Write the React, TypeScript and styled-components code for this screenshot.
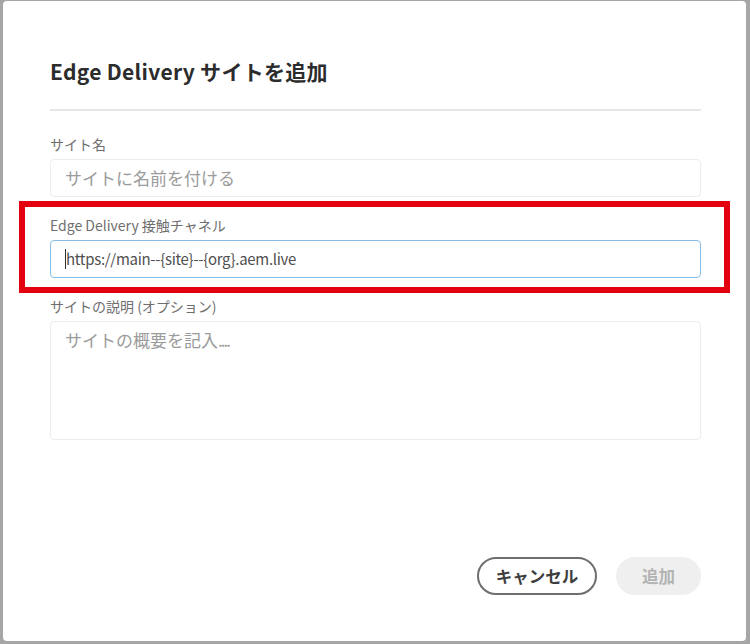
import React from "react";
import styled, { createGlobalStyle } from "styled-components";

const Global = createGlobalStyle`
  html, body { margin: 0; padding: 0; }
  body {
    background: #a6a6a6;
    font-family: "Noto Sans CJK JP", "Noto Sans", sans-serif;
  }
`;

const Backdrop = styled.div`
  width: 750px;
  height: 644px;
  box-sizing: border-box;
  padding: 1px 4px 3px 3px;
  background: #a6a6a6;
  display: flex;
`;

const Dialog = styled.div`
  position: relative;
  flex: 1;
  background: #ffffff;
  border-radius: 4px;
  display: flex;
  flex-direction: column;
  padding: 56px 45px 46px 47px;
  box-sizing: border-box;
`;

const Title = styled.h1`
  margin: 0;
  font-size: 21px;
  line-height: 28px;
  font-weight: 700;
  color: #2c2c2c;
  letter-spacing: 0.3px;
`;

const Divider = styled.hr`
  margin: 24px 0 0 0;
  border: none;
  height: 2px;
  background: #e6e6e6;
`;

const Form = styled.div`
  display: flex;
  flex-direction: column;
  gap: 18px;
  margin-top: 23px;
`;

const FieldGroup = styled.div`
  display: flex;
  flex-direction: column;
  gap: 5px;
`;

const Label = styled.label`
  font-size: 14px;
  line-height: 20px;
  color: #6e6e6e;
`;

const Field = styled.div<{ $focused?: boolean; $tall?: boolean }>`
  box-sizing: border-box;
  height: ${(p) => (p.$tall ? "119px" : "38px")};
  border: 1px solid ${(p) => (p.$focused ? "#86bfe6" : "#ededed")};
  border-radius: 4px;
  padding: ${(p) => (p.$tall ? "5px 14px" : "0 14px")};
  display: flex;
  align-items: ${(p) => (p.$tall ? "flex-start" : "center")};
  font-size: 17px;
  line-height: 26px;
  background: #fff;
`;

const Placeholder = styled.span`
  color: #9b9b9b;
`;

const Dots = styled.span`
  letter-spacing: -2px;
`;

const Value = styled.span`
  color: #505050;
  font-size: 15px;
  letter-spacing: -0.3px;
  display: flex;
  align-items: center;
`;

const Caret = styled.span`
  display: inline-block;
  width: 1px;
  height: 20px;
  background: #333;
`;

const Spacer = styled.div`
  flex: 1;
`;

const Actions = styled.div`
  display: flex;
  justify-content: flex-end;
  gap: 19px;
`;

const Button = styled.button<{ $variant: "secondary" | "disabled" }>`
  box-sizing: border-box;
  height: 38px;
  border-radius: 19px;
  font-family: "Noto Sans CJK JP", "Noto Sans", sans-serif;
  font-size: 16.5px;
  font-weight: 700;
  padding: 0;
  white-space: nowrap;
  display: flex;
  align-items: center;
  justify-content: center;
  cursor: pointer;
  ${(p) =>
    p.$variant === "secondary"
      ? `
    width: 120px;
    background: #fff;
    border: 2px solid #6e6e6e;
    color: #3e3e3e;
  `
      : `
    width: 85px;
    background: #efefef;
    border: 2px solid #efefef;
    color: #b3b3b3;
  `}
`;

const Highlight = styled.div`
  position: absolute;
  left: 16px;
  top: 200px;
  width: 711px;
  height: 92px;
  box-sizing: border-box;
  border: 6px solid #e3000f;
  pointer-events: none;
`;

export default function App() {
  return (
    <>
      <Global />
      <Backdrop>
        <Dialog>
          <Title>Edge Delivery サイトを追加</Title>
          <Divider />
          <Form>
            <FieldGroup>
              <Label>サイト名</Label>
              <Field>
                <Placeholder>サイトに名前を付ける</Placeholder>
              </Field>
            </FieldGroup>
            <FieldGroup>
              <Label>Edge Delivery 接触チャネル</Label>
              <Field $focused>
                <Value>
                  <Caret />
                  https://main--{"{site}"}--{"{org}"}.aem.live
                </Value>
              </Field>
            </FieldGroup>
            <FieldGroup>
              <Label>サイトの説明 (オプション)</Label>
              <Field $tall>
                <Placeholder>
                  サイトの概要を記入<Dots>....</Dots>
                </Placeholder>
              </Field>
            </FieldGroup>
          </Form>
          <Spacer />
          <Actions>
            <Button $variant="secondary">キャンセル</Button>
            <Button $variant="disabled" disabled>
              追加
            </Button>
          </Actions>
          <Highlight />
        </Dialog>
      </Backdrop>
    </>
  );
}
